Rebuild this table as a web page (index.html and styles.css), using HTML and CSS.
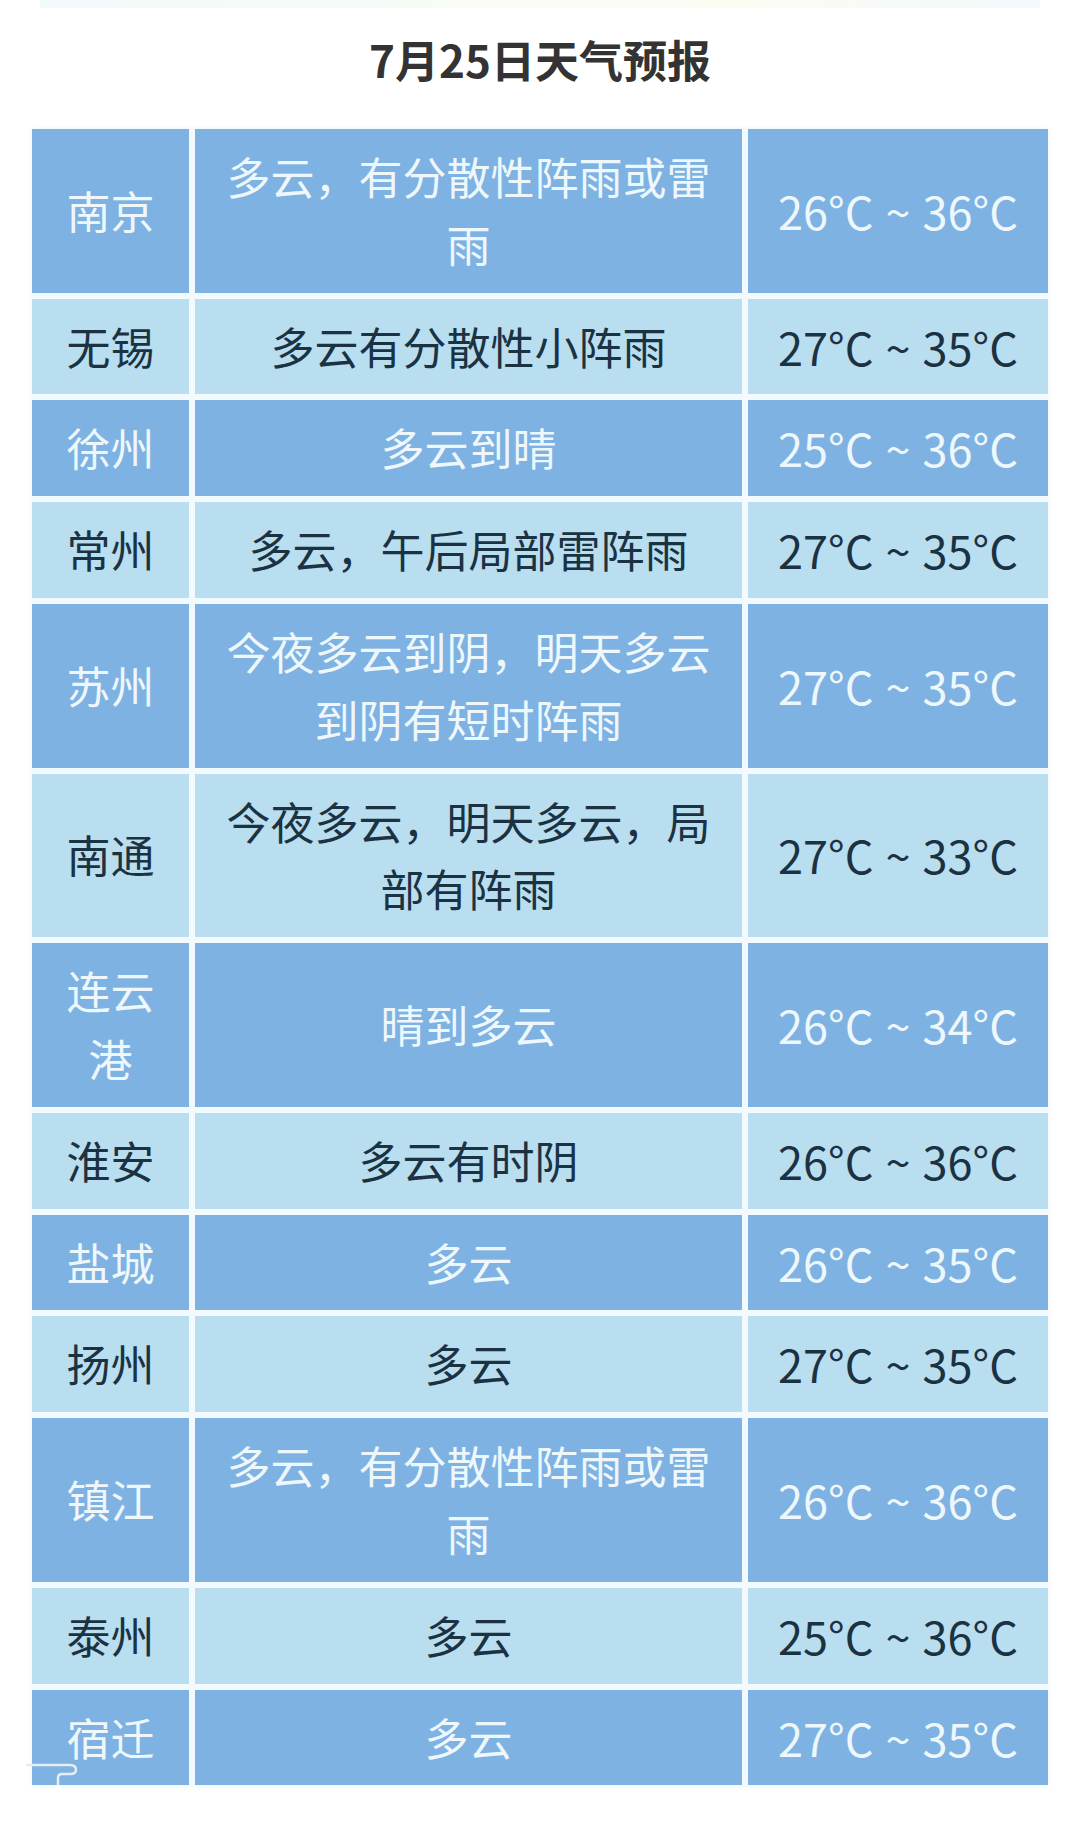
FILE: index.html
```html
<!DOCTYPE html>
<html lang="zh-CN">
<head>
<meta charset="utf-8">
<title>7月25日天气预报</title>
<link rel="stylesheet" href="styles.css">
</head>
<body>
<div class="page">
  <div class="topstrip"></div>
  <h1 class="title">7月25日天气预报</h1>
  <div class="table-wrap">
    <div class="table">
      <div class="cell dark">南京</div><div class="cell dark">多云，有分散性阵雨或雷雨</div><div class="cell dark temp">26°C ~ 36°C</div>
      <div class="cell light">无锡</div><div class="cell light">多云有分散性小阵雨</div><div class="cell light temp">27°C ~ 35°C</div>
      <div class="cell dark">徐州</div><div class="cell dark">多云到晴</div><div class="cell dark temp">25°C ~ 36°C</div>
      <div class="cell light">常州</div><div class="cell light">多云，午后局部雷阵雨</div><div class="cell light temp">27°C ~ 35°C</div>
      <div class="cell dark">苏州</div><div class="cell dark">今夜多云到阴，明天多云到阴有短时阵雨</div><div class="cell dark temp">27°C ~ 35°C</div>
      <div class="cell light">南通</div><div class="cell light">今夜多云，明天多云，局部有阵雨</div><div class="cell light temp">27°C ~ 33°C</div>
      <div class="cell dark">连云港</div><div class="cell dark">晴到多云</div><div class="cell dark temp">26°C ~ 34°C</div>
      <div class="cell light">淮安</div><div class="cell light">多云有时阴</div><div class="cell light temp">26°C ~ 36°C</div>
      <div class="cell dark">盐城</div><div class="cell dark">多云</div><div class="cell dark temp">26°C ~ 35°C</div>
      <div class="cell light">扬州</div><div class="cell light">多云</div><div class="cell light temp">27°C ~ 35°C</div>
      <div class="cell dark">镇江</div><div class="cell dark">多云，有分散性阵雨或雷雨</div><div class="cell dark temp">26°C ~ 36°C</div>
      <div class="cell light">泰州</div><div class="cell light">多云</div><div class="cell light temp">25°C ~ 36°C</div>
      <div class="cell dark">宿迁</div><div class="cell dark">多云</div><div class="cell dark temp">27°C ~ 35°C</div>
    </div>
    <svg class="curl" width="56" height="24" viewBox="0 0 56 24" aria-hidden="true">
      <path d="M0 4 H44 Q50 4 50 9 Q50 13 44 13 H36 Q32 13 32 17 V24" fill="none" stroke="#e6eef2" stroke-width="2.5"/>
    </svg>
  </div>
</div>
</body>
</html>
```

FILE: styles.css
```css
html, body {
  margin: 0;
  padding: 0;
  background: #ffffff;
}

.page {
  width: 1080px;
  min-height: 1841px;
  position: relative;
  font-family: "Noto Sans CJK SC", "Noto Sans", sans-serif;
}

.topstrip {
  height: 8px;
  background: linear-gradient(90deg, #eef8fb 0%, #f6fbf4 40%, #fbfbef 70%, #eef8fb 100%);
  margin: 0 40px;
  opacity: 0.8;
}

.title {
  margin: 0;
  padding-top: 21px;
  height: 60px;
  line-height: 60px;
  font-size: 44px;
  font-weight: 700;
  color: #333333;
  text-align: center;
  letter-spacing: 0;
}

.table-wrap {
  position: relative;
  margin: 40px 0 0 32px;
  width: 1016px;
}

.table {
  display: grid;
  grid-template-columns: 157px 547px 300px;
  gap: 6px;
  background: #f2fafd;
  box-shadow: 0 0 6px rgba(200, 220, 230, 0.35);
}

.cell {
  display: flex;
  align-items: center;
  justify-content: center;
  text-align: center;
  padding: 14px 20px;
  line-height: 67.8px;
  font-size: 44px;
  min-height: 67.8px;
}

.dark {
  background: #7db2e2;
  color: #eef7fb;
}

.light {
  background: #b8def0;
  color: #1b3242;
}

.temp {
  font-size: 45px;
  white-space: nowrap;
  word-spacing: 2px;
}

.curl {
  position: absolute;
  left: -6px;
  bottom: 0;
}
```
